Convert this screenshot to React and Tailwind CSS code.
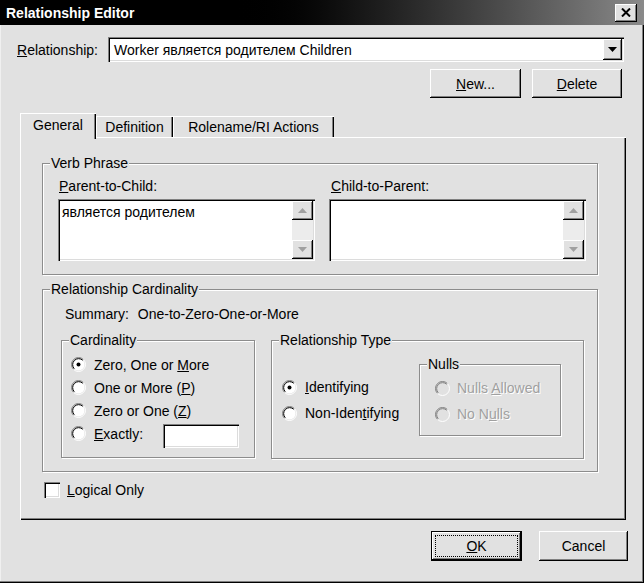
const raised = 'shadow-[inset_-1px_-1px_0_#000,inset_1px_1px_0_#fff,inset_-2px_-2px_0_#808080]';
const sunken = 'shadow-[inset_1px_1px_0_#808080,inset_2px_2px_0_#000,inset_-1px_-1px_0_#fff,inset_-2px_-2px_0_#dcdcdc]';

function Radio({ checked, disabled }) {
  return (
    <svg width="15" height="15" viewBox="0 0 15 15" className="shrink-0">
      <circle cx="7.5" cy="7.5" r="6" fill={disabled ? '#e1e1e1' : '#fff'} />
      <path d="M2.55 12.45A7 7 0 0 1 12.45 2.55" stroke="#808080" fill="none" />
      <path d="M3.26 11.74A6 6 0 0 1 11.74 3.26" stroke={disabled ? '#808080' : '#000'} fill="none" />
      <path d="M12.45 2.55A7 7 0 0 1 2.55 12.45" stroke="#fff" fill="none" />
      {checked && <circle cx="7.5" cy="7.5" r="2" fill="#000" />}
    </svg>
  );
}

function Group({ label, className = '', children }) {
  return (
    <div className={`relative border border-[#8c8c8c] shadow-[inset_1px_1px_0_#fff,1px_1px_0_#fff] ${className}`}>
      <span className="absolute left-[7px] top-[-9px] bg-[#e1e1e1] px-[1px] leading-[16px]">{label}</span>
      {children}
    </div>
  );
}

function ScrollBtn({ up }) {
  return (
    <div className={`flex h-[19px] items-center justify-center bg-[#e1e1e1] ${raised}`}>
      <svg width="9" height="5" viewBox="0 0 9 5">
        <path d={up ? 'M0 5h9L4.5 0z' : 'M0 0h9L4.5 5z'} fill="#a0a0a0" />
      </svg>
    </div>
  );
}

function TextBox({ text }) {
  return (
    <div className={`flex h-[62px] w-[257px] bg-white p-[2px] ${sunken}`}>
      <div className="flex-1 px-[2px] pt-[3px] leading-[16px]">{text}</div>
      <div className="flex w-[21px] flex-col bg-[#ececec]">
        <ScrollBtn up />
        <div className="flex-1" />
        <ScrollBtn />
      </div>
    </div>
  );
}

function Button({ children, def, className = '' }) {
  if (def) {
    return (
      <div className={`flex h-[30px] border border-black bg-[#e1e1e1] ${className}`}>
        <div className={`flex flex-1 p-[3px] ${raised}`}>
          <div className="flex flex-1 items-center justify-center border border-dotted border-black">{children}</div>
        </div>
      </div>
    );
  }
  return (
    <div className={`flex items-center justify-center bg-[#e1e1e1] ${raised} ${className}`}>{children}</div>
  );
}

function RadioRow({ checked, disabled, children, className = '' }) {
  return (
    <div className={`flex items-center ${className}`}>
      <Radio checked={checked} disabled={disabled} />
      <span className={disabled ? 'ml-[7px] text-[#a0a0a0] [text-shadow:1px_1px_0_#fff]' : 'ml-[8px]'}>{children}</span>
    </div>
  );
}

export default function App() {
  return (
    <div className="flex h-[583px] w-[644px] flex-col bg-[#e1e1e1] font-['Liberation_Sans',Arial,sans-serif] text-[14px] leading-[16px] text-black shadow-[inset_-1px_-1px_0_#000,inset_-2px_-2px_0_#808080,inset_1px_1px_0_#f0f0f0]">
      {/* title bar */}
      <div className="flex h-[25px] items-center bg-linear-to-r from-black from-35% to-[#8a8a8a] pl-[6px] pr-[7px]">
        <span className="flex-1 font-bold text-white">Relationship Editor</span>
        <div className={`flex h-[18px] w-[22px] items-center justify-center bg-[#e1e1e1] ${raised}`}>
          <svg width="10" height="9" viewBox="0 0 10 9">
            <path d="M1 0.5L9 8.5M9 0.5L1 8.5" stroke="#000" strokeWidth="2" />
          </svg>
        </div>
      </div>

      {/* relationship combo */}
      <div className="mt-[12px] flex h-[25px] items-center pl-[17px] pr-[20px]">
        <span className="w-[91px]"><u>R</u>elationship:</span>
        <div className={`flex h-full flex-1 items-center bg-white p-[2px] ${sunken}`}>
          <span className="flex-1 pl-[4px]">Worker является родителем Children</span>
          <div className={`flex h-full w-[19px] items-center justify-center bg-[#e1e1e1] ${raised}`}>
            <svg width="9" height="5" viewBox="0 0 9 5">
              <path d="M0 0h9L4.5 5z" fill="#000" />
            </svg>
          </div>
        </div>
      </div>

      <div className="mt-[7px] flex justify-end gap-[11px] pr-[22px]">
        <Button className="h-[29px] w-[91px]"><span><u>N</u>ew...</span></Button>
        <Button className="h-[29px] w-[90px]"><span><u>D</u>elete</span></Button>
      </div>

      {/* tabs */}
      <div className="ml-[20px] mt-[15px] flex items-end">
        <div className="relative z-10 mb-[-2px] flex h-[26px] w-[76px] items-center justify-center bg-[#e1e1e1] pb-[2px] shadow-[inset_1px_1px_0_#fff,inset_-1px_0_0_#000,inset_-2px_0_0_#808080]">
          General
        </div>
        <div className="flex h-[21px] w-[77px] items-center justify-center shadow-[inset_1px_1px_0_#fff,inset_-1px_0_0_#000,inset_-2px_0_0_#808080]">
          Definition
        </div>
        <div className="flex h-[21px] w-[161px] items-center justify-center shadow-[inset_1px_1px_0_#fff,inset_-1px_0_0_#000,inset_-2px_0_0_#808080]">
          Rolename/RI Actions
        </div>
      </div>

      {/* tab panel */}
      <div className="ml-[20px] flex h-[383px] w-[606px] flex-col pl-[22px] pt-[26px] shadow-[inset_1px_1px_0_#fff,inset_-1px_-1px_0_#000,inset_-2px_-2px_0_#808080]">
        <Group label="Verb Phrase" className="h-[112px] w-[556px] pl-[15px] pt-[14px]">
          <div className="flex gap-[14px]">
            <div className="flex flex-col">
              <span className="pl-[1px]"><u>P</u>arent-to-Child:</span>
              <div className="mt-[5px]"><TextBox text="является родителем" /></div>
            </div>
            <div className="flex flex-col">
              <span className="pl-[2px]"><u>C</u>hild-to-Parent:</span>
              <div className="mt-[5px]"><TextBox text="" /></div>
            </div>
          </div>
        </Group>

        <Group label="Relationship Cardinality" className="mt-[14px] h-[183px] w-[556px] pl-[22px] pt-[16px]">
          <div className="flex">
            <span>Summary:</span>
            <span className="ml-[9px]">One-to-Zero-One-or-More</span>
          </div>
          <div className="ml-[-4px] mt-[18px] flex gap-[16px]">
            <Group label="Cardinality" className="h-[118px] w-[194px] pl-[9px] pt-[12px]">
              <RadioRow checked className="h-[23px]">Zero, One or <u>M</u>ore</RadioRow>
              <RadioRow className="h-[23px]">One or More (<u>P</u>)</RadioRow>
              <RadioRow className="h-[23px]">Zero or One (<u>Z</u>)</RadioRow>
              <div className="flex h-[23px] items-center">
                <Radio />
                <span className="ml-[8px] w-[69px]"><u>E</u>xactly:</span>
                <div className={`mt-[5px] h-[24px] w-[76px] bg-white ${sunken}`} />
              </div>
            </Group>
            <Group label="Relationship Type" className="flex h-[119px] w-[313px] pl-[10px] pt-[23px]">
              <div className="w-[137px] pt-[10px]">
                <RadioRow checked className="h-[26px]"><u>I</u>dentifying</RadioRow>
                <RadioRow className="h-[26px]">Non-Iden<u>t</u>ifying</RadioRow>
              </div>
              <Group label="Nulls" className="h-[72px] w-[142px] pl-[15px] pt-[10px]">
                <RadioRow disabled className="h-[26px]">Nulls <u>A</u>llowed</RadioRow>
                <RadioRow disabled className="h-[26px]">No N<u>u</u>lls</RadioRow>
              </Group>
            </Group>
          </div>
        </Group>

        <div className="ml-[2px] mt-[10px] flex items-center">
          <div className={`h-[16px] w-[16px] bg-white ${sunken}`} />
          <span className="ml-[7px]"><u>L</u>ogical Only</span>
        </div>
      </div>

      {/* dialog buttons */}
      <div className="mt-[11px] flex justify-end gap-[17px] pr-[16px]">
        <Button def className="w-[91px]"><span><u>O</u>K</span></Button>
        <Button className="h-[30px] w-[89px]">Cancel</Button>
      </div>
    </div>
  );
}
